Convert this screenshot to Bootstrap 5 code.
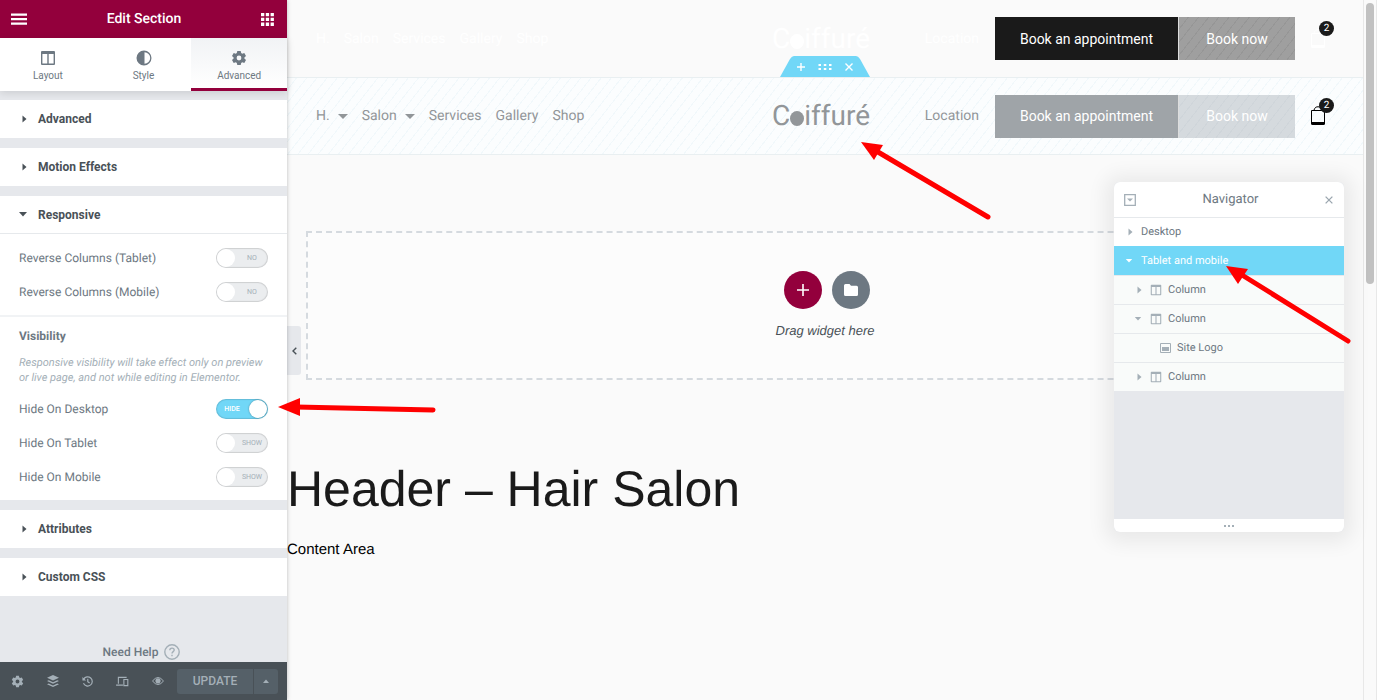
<!DOCTYPE html>
<html lang="en">
<head>
<meta charset="utf-8">
<meta name="viewport" content="width=device-width, initial-scale=1">
<title>Edit Section</title>
<link href="https://cdn.jsdelivr.net/npm/bootstrap@5.3.0/dist/css/bootstrap.min.css" rel="stylesheet">
<script src="https://cdn.jsdelivr.net/npm/bootstrap@5.3.0/dist/js/bootstrap.bundle.min.js" defer></script>
<style>
  :root { --brand:#93003c; --ink:#495157; --mid:#6d7882; --soft:#a4afb7; --line:#e6e9ec; --panel:#e6e8ec; --sky:#71d7f7; --black:#1a1a1a; }
  body { font-family:Roboto,"Liberation Sans",sans-serif; font-size:12px; line-height:20px; color:var(--mid); background:#fafafa; text-rendering:geometricPrecision; }
  button { font:inherit; color:inherit; background:none; border:0; padding:0; }
  svg { display:block; flex:none; fill:currentColor; }
  a { color:inherit; text-decoration:none; }

  /* Editor panel */
  .editor { width:287px; background:var(--panel); z-index:3; box-shadow:0 0 4px rgba(0,0,0,.25); }
  .editor-top { height:38px; background:var(--brand); color:#fff; padding:0 13px 0 11px; }
  .editor-top h1 { font-size:14px; line-height:20px; font-weight:500; }
  .tabs { box-shadow:0 2px 8px rgba(0,0,0,.12); background:#fff; height:53px; }
  .tabs button { font-size:10px; line-height:12px; border-bottom:3px solid transparent; padding-top:6px; }
  .tabs button.active { border-color:var(--brand); background:linear-gradient(#f1f3f5,#fff); }
  .sections { margin-top:9px; gap:10px; }
  .fold { height:38px; background:#fff; color:var(--ink); font-weight:700; padding:0 19px; gap:11px; text-align:left; width:100%; }
  .fold.open { border-bottom:1px solid var(--line); }
  .fold svg { width:8px; }
  .fold span { line-height:20px; }
  .controls { background:#fff; padding-bottom:13px; }
  .group { padding:14px 19px 0; gap:14px; }
  .group + .group { margin-top:13px; border-top:2px solid #f1f3f5; padding-top:9px; }
  .group h2 { font-size:12px; line-height:20px; font-weight:700; }
  .note { font-size:11px; line-height:15px; font-style:italic; color:var(--soft); margin:-5px 0 0; }
  .toggle-box { width:52px; height:20px; }
  .toggle-box input { appearance:none; width:52px; height:20px; border-radius:10px; background:#ebedef; box-shadow:inset 0 0 1px 1px rgba(0,0,0,.13); margin:0; display:block; }
  .toggle-box input::before { content:""; display:block; width:18px; height:18px; margin:1px; border-radius:50%; background:#fff; }
  .toggle-box input:checked { background:var(--sky); }
  .toggle-box input:checked::before { margin-left:33px; box-shadow:0 0 2px rgba(0,0,0,.4); }
  .toggle-box span { font-size:7px; line-height:20px; color:var(--soft); top:0; left:20px; right:0; text-align:center; pointer-events:none; }
  .toggle-box input:checked + span { left:0; right:20px; color:#fff; font-weight:500; }
  .help { font-weight:500; gap:6px; padding-right:4px; }
  .editor-foot { height:38px; background:var(--ink); color:var(--soft); padding-right:9px; }
  .tool { width:35px; height:38px; }
  .save-box { height:25px; background:#556068; border-radius:3px; font-weight:500; }
  .save-box .save { width:76px; }
  .save-box .more { border-left:1px solid var(--ink); width:25px; }

  /* Page preview */
  .preview { min-width:0; }
  .site-bar { display:grid; grid-template-columns:1fr auto 1fr; align-items:center; height:77px; padding:0 37px 0 29px; font-size:14px; color:#fff; }
  .site-bar.picked { height:78px; color:#929699; background:repeating-linear-gradient(128deg,#fbfdfe 0 7px,#f1f8fb 7px 8px); border:1px solid #e9eff1; border-left:0; border-right:0; }
  .menu { gap:14px; }
  .logo { font-size:28px; line-height:32px; }
  .logo i { width:14px; height:15px; border-radius:50%; background:currentColor; margin-top:5px; }
  .cta { height:43px; color:#fff; }
  .cta-a { width:184px; background:var(--black); border-right:1px solid #ddd; }
  .cta-b { width:116px; background:repeating-linear-gradient(128deg,#9f9f9f 0 7px,#969696 7px 8px); }
  .picked .cta-a { background:#9fa4a8; }
  .picked .cta-b { background:repeating-linear-gradient(128deg,#d5dade 0 7px,#cfd5da 7px 8px); }
  .bag { margin-left:15px; width:16px; height:20px; }
  .count { width:15px; height:15px; border-radius:50%; background:var(--black); color:#fff; font-size:10px; line-height:15px; text-align:center; top:-8px; right:-8px; }
  .handle { bottom:100%; left:50%; margin:0 0 1px -45px; width:90px; height:21px; color:#fff; }
  .handle > svg { color:var(--sky); }
  .handle > div { gap:13px; }
  .drop { margin:76px 19px 0; min-height:149px; border:2px dashed #d5dadf; background:#fcfcfc; color:var(--ink); font-family:"Liberation Sans",Arial,sans-serif; font-size:13px; font-style:italic; gap:12px; }
  .round-set { gap:10px; }
  .round-btn { width:38px; height:38px; border-radius:50%; color:#fff; background:var(--mid); }
  .round-btn.add { background:var(--brand); }
  .page-title { font-family:"Liberation Sans",Arial,sans-serif; font-size:50px; line-height:64px; font-weight:400; color:var(--black); margin:77px 0 0; white-space:nowrap; }
  .page-text { font-family:"Liberation Sans",Arial,sans-serif; font-size:15px; line-height:20px; color:#000; margin:19px 0 0; }
  .collapse-tab { left:0; top:326px; width:14px; height:49px; background:var(--panel); border-radius:0 3px 3px 0; }
  .scroller { width:14px; border:solid #e8e8e8; border-width:0 1px; padding:3px 2px; }
  .scroller div { height:281px; border-radius:4px; background:#c1c1c1; }

  /* Floating navigator window */
  .navigator { right:33px; top:182px; width:230px; height:350px; background:var(--panel); border-radius:5px; box-shadow:0 2px 20px 8px rgba(0,0,0,.07); font-size:11px; z-index:4; }
  .navigator header { height:35px; padding:0 11px 0 10px; background:#fff; font-size:13px; }
  .tree li { height:29px; border-top:1px solid var(--line); background:#f9fbfa; padding-left:20px; }
  .tree li.lvl-top { background:#fff; padding-left:11px; }
  .tree li.lvl-top.on { background:var(--sky); color:#fff; border-color:var(--sky); }
  .tree li.leaf { padding-left:46px; }
  .tree .caret { width:8px; margin-right:8px; }
  .tree .kind { margin-right:6px; }
  .tree svg { color:var(--soft); }
  .tree .on svg { color:#fff; }
  .navigator footer { height:13px; background:#fff; color:var(--soft); }
  .pointer { z-index:6; pointer-events:none; overflow:visible; }
  .pointer path { fill:#f00; }
  .pointer line { stroke:#f00; stroke-width:5; stroke-linecap:round; }
</style>
</head>
<body class="d-flex vh-100 overflow-hidden">
<svg class="d-none">
  <symbol id="right" viewBox="0 0 8 8"><path d="M3.500 .5l4 3.500-4 3.500z"/></symbol>
  <symbol id="down" viewBox="0 0 8 5"><path d="M0 0h8L4 4.500z"/></symbol>
  <symbol id="gear" viewBox="0 0 16 16"><path fill-rule="evenodd" d="M6.300 1h3.400l.5 2.100 1 .6 2.100-.7 1.700 3-1.600 1.400v1.200l1.600 1.400-1.700 3-2.100-.7-1 .6-.5 2.100H6.300l-.5-2.100-1-.6-2.100.7-1.700-3 1.600-1.400V7.400L1 6l1.700-3 2.100.7 1-.6zM8 5.600a2.400 2.400 0 1 0 0 4.800 2.400 2.400 0 0 0 0-4.800z"/></symbol>
  <symbol id="cols" viewBox="0 0 16 16"><path fill-rule="evenodd" d="M2 1h12a1 1 0 0 1 1 1v12a1 1 0 0 1-1 1H2a1 1 0 0 1-1-1V2a1 1 0 0 1 1-1zm.4 3v9.600h4.900V4zm6.300 0v9.600h4.900V4z"/></symbol>
  <symbol id="bag" viewBox="0 0 16 20"><path fill="none" stroke="currentColor" d="M1.500 4.500h13v12h-13zM4 4C5 1 6.500.8 8 .8S11 1 12 4"/><path d="M1 16h14v1.500q0 1.500-1.500 1.500h-11Q1 19 1 17.500z"/></symbol>
</svg>

<aside class="editor d-flex flex-column flex-shrink-0 position-relative">
  <header class="editor-top d-flex align-items-center justify-content-between">
    <button aria-label="Menu"><svg width="16" height="12" viewBox="0 0 16 12"><path d="M0 .5h16v2.200H0zM0 5h16v2.200H0zM0 9.500h16v2.200H0z"/></svg></button>
    <h1 class="m-0">Edit Section</h1>
    <button aria-label="Widgets"><svg width="13" height="13" viewBox="0 0 13 13"><path d="M0 0h3.300v3.300H0zM4.800 0h3.300v3.300H4.800zM9.600 0h3.300v3.300H9.600zM0 4.800h3.300v3.300H0zM4.800 4.800h3.300v3.300H4.800zM9.600 4.800h3.300v3.300H9.600zM0 9.600h3.300v3.300H0zM4.800 9.600h3.300v3.300H4.800zM9.600 9.600h3.300v3.300H9.600z"/></svg></button>
  </header>
  <nav class="tabs d-flex">
    <button class="flex-fill w-100 d-flex flex-column align-items-center justify-content-center gap-1"><svg width="16" height="16"><use href="#cols"/></svg>Layout</button>
    <button class="flex-fill w-100 d-flex flex-column align-items-center justify-content-center gap-1"><svg width="16" height="16" viewBox="0 0 16 16"><path fill-rule="evenodd" d="M8 .5a7.500 7.500 0 1 0 0 15 7.500 7.500 0 0 0 0-15zM8.500 2.300a5.700 5.700 0 0 1 0 11.400z"/></svg>Style</button>
    <button class="active flex-fill w-100 d-flex flex-column align-items-center justify-content-center gap-1"><svg width="16" height="16"><use href="#gear"/></svg>Advanced</button>
  </nav>
  <div class="sections d-flex flex-column">
    <button class="fold d-flex align-items-center"><svg height="8"><use href="#right"/></svg><span>Advanced</span></button>
    <button class="fold d-flex align-items-center"><svg height="8"><use href="#right"/></svg><span>Motion Effects</span></button>
    <section>
      <button class="fold open d-flex align-items-center" aria-expanded="true"><svg height="5"><use href="#down"/></svg><span>Responsive</span></button>
      <div class="controls">
        <div class="group d-flex flex-column">
          <div class="d-flex justify-content-between"><label for="rev-tablet">Reverse Columns (Tablet)</label><div class="toggle-box position-relative"><input type="checkbox" id="rev-tablet"><span class="position-absolute">NO</span></div></div>
          <div class="d-flex justify-content-between"><label for="rev-mobile">Reverse Columns (Mobile)</label><div class="toggle-box position-relative"><input type="checkbox" id="rev-mobile"><span class="position-absolute">NO</span></div></div>
        </div>
        <div class="group d-flex flex-column">
          <h2 class="m-0">Visibility</h2>
          <p class="note">Responsive visibility will take effect only on preview or live page, and not while editing in Elementor.</p>
          <div class="d-flex justify-content-between position-relative"><label for="hide-desktop">Hide On Desktop</label><div class="toggle-box position-relative"><input type="checkbox" id="hide-desktop" checked><span class="position-absolute">HIDE</span></div>
            <svg class="pointer position-absolute top-0 start-100" width="170" height="20" viewBox="0 0 170 20"><path d="M10 8L32-1v18z"/><line x1="28" y1="8" x2="165" y2="11"/></svg>
          </div>
          <div class="d-flex justify-content-between"><label for="hide-tablet">Hide On Tablet</label><div class="toggle-box position-relative"><input type="checkbox" id="hide-tablet"><span class="position-absolute">SHOW</span></div></div>
          <div class="d-flex justify-content-between"><label for="hide-mobile">Hide On Mobile</label><div class="toggle-box position-relative"><input type="checkbox" id="hide-mobile"><span class="position-absolute">SHOW</span></div></div>
        </div>
      </div>
    </section>
    <button class="fold d-flex align-items-center"><svg height="8"><use href="#right"/></svg><span>Attributes</span></button>
    <button class="fold d-flex align-items-center"><svg height="8"><use href="#right"/></svg><span>Custom CSS</span></button>
  </div>
  <a href="#" class="help mt-auto d-flex align-items-center justify-content-center">Need Help
    <svg width="16" height="16" viewBox="0 0 16 16" fill="none" stroke="#a4afb7" stroke-width="1.400"><circle cx="8" cy="8" r="7.200" fill="none"/><path fill="none" d="M5.800 6.300c0-3 4.400-2.700 4.400-.2 0 1.500-2.200 1.600-2.200 3.400M8 10.800v1.400"/></svg></a>
  <footer class="editor-foot d-flex align-items-center">
    <button class="tool d-flex align-items-center justify-content-center" aria-label="Settings"><svg width="13" height="13"><use href="#gear"/></svg></button>
    <button class="tool d-flex align-items-center justify-content-center" aria-label="Structure"><svg width="14" height="14" viewBox="0 0 14 14"><path d="M7 1l6 2.800-6 2.800-6-2.800zM1 7l1.700-.8L7 8.200l4.300-2L13 7 7 9.800zM1 10.200l1.700-.8L7 11.400l4.300-2 1.700.8L7 13z"/></svg></button>
    <button class="tool d-flex align-items-center justify-content-center" aria-label="History"><svg width="11" height="11" viewBox="0 0 12 12"><path fill="none" stroke="currentColor" stroke-width="1.300" d="M1.800 3.500a5 5 0 1 1-.2 4.500M6.300 3v3.300l2 1.200"/><path d="M.5 1v4h4z"/></svg></button>
    <button class="tool d-flex align-items-center justify-content-center" aria-label="Responsive mode"><svg width="13" height="11" viewBox="0 0 14 12"><path fill="none" stroke="currentColor" stroke-width="1.200" d="M2.500 8.500v-7h9M0 10h7.500M8.500 3.800h4.300v6.700H8.500z"/></svg></button>
    <button class="tool d-flex align-items-center justify-content-center" aria-label="Preview"><svg width="12" height="10" viewBox="0 0 12 10"><path fill="none" stroke="currentColor" d="M.5 5Q6-2 11.500 5 6 12 .5 5z"/><circle cx="6" cy="4.800" r="2.600"/></svg></button>
    <div class="save-box d-flex ms-auto"><button class="save">UPDATE</button><button class="more d-flex align-items-center justify-content-center" aria-label="Save options"><svg width="6" height="4" viewBox="0 0 6 4"><path d="M0 4l3-3.500L6 4z"/></svg></button></div>
  </footer>
</aside>

<main class="preview flex-grow-1 position-relative">
  <div class="site-bar">
    <nav class="menu d-flex"><a href="#">H.</a><a href="#">Salon</a><a href="#">Services</a><a href="#">Gallery</a><a href="#">Shop</a></nav>
    <a href="#" class="logo d-flex align-items-center">C<i></i>iffuré</a>
    <div class="d-flex align-items-center justify-content-end"><a href="#" class="me-3">Location</a><button class="cta cta-a">Book an appointment</button><button class="cta cta-b">Book now</button><a href="#" class="bag position-relative"><svg width="16" height="20"><use href="#bag"/></svg><span class="count position-absolute">2</span></a></div>
  </div>
  <div class="site-bar picked position-relative">
    <div class="handle position-absolute">
      <svg width="90" height="21" viewBox="0 0 90 21"><path d="M0 21L10 3q2-3 4-3h62q2 0 4 3l10 18z"/></svg>
      <div class="position-absolute top-0 start-0 w-100 h-100 d-flex align-items-center justify-content-center">
        <button aria-label="Add section"><svg width="8" height="8" viewBox="0 0 8 8"><path d="M3.300 0h1.400v3.300H8v1.400H4.700V8H3.300V4.700H0V3.300h3.300z"/></svg></button>
        <button aria-label="Edit section"><svg width="14" height="8" viewBox="0 0 14 8"><path d="M.5 1h2.500v2H.5zM5.800 1h2.500v2H5.800zM11 1h2.500v2H11zM.5 5h2.500v2H.5zM5.800 5h2.500v2H5.800zM11 5h2.500v2H11z"/></svg></button>
        <button aria-label="Delete section"><svg width="8" height="8" viewBox="0 0 8 8"><path stroke="currentColor" stroke-width="1.400" d="M.5.5l7 7M7.500.5l-7 7"/></svg></button>
      </div>
    </div>
    <nav class="menu d-flex"><a href="#" class="d-flex align-items-center gap-2">H. <svg width="10" height="5" viewBox="0 0 10 5"><path d="M0 0h10L5 5z"/></svg></a><a href="#" class="d-flex align-items-center gap-2">Salon <svg width="10" height="5" viewBox="0 0 10 5"><path d="M0 0h10L5 5z"/></svg></a><a href="#">Services</a><a href="#">Gallery</a><a href="#">Shop</a></nav>
    <a href="#" class="logo d-flex align-items-center position-relative">C<i></i>iffuré
      <svg class="pointer position-absolute top-100 start-100" width="130" height="90" viewBox="0 0 130 90"><path d="M-9 10l22 3-9 15z"/><line x1="8" y1="20" x2="118" y2="85"/></svg></a>
    <div class="d-flex align-items-center justify-content-end"><a href="#" class="me-3">Location</a><button class="cta cta-a">Book an appointment</button><button class="cta cta-b">Book now</button><a href="#" class="bag position-relative text-black"><svg width="16" height="20"><use href="#bag"/></svg><span class="count position-absolute">2</span></a></div>
  </div>
  <section class="drop d-flex flex-column align-items-center justify-content-center">
    <div class="round-set d-flex ps-1">
      <button class="round-btn add d-flex align-items-center justify-content-center" aria-label="Add widget"><svg width="12" height="12" viewBox="0 0 12 12"><path d="M5.200 0h1.600v5.200H12v1.600H6.800V12H5.200V6.800H0V5.200h5.200z"/></svg></button>
      <button class="round-btn d-flex align-items-center justify-content-center" aria-label="Add template"><svg width="14" height="12" viewBox="0 0 14 12"><path d="M1.500 0h4L7 1.700h5.500Q14 1.700 14 3.200v7.300q0 1.500-1.500 1.500h-11Q0 12 0 10.500v-9Q0 0 1.500 0z"/></svg></button>
    </div>
    <div>Drag widget here</div>
  </section>
  <h2 class="page-title">Header – Hair Salon</h2>
  <p class="page-text">Content Area</p>
  <button class="collapse-tab position-absolute d-flex align-items-center justify-content-center" aria-label="Collapse panel"><svg width="5" height="8" viewBox="0 0 5 8"><path fill="none" stroke="#495157" stroke-width="1.400" d="M4.300.8L1 4l3.300 3.200"/></svg></button>
</main>
<div class="scroller flex-shrink-0"><div></div></div>

<section class="navigator position-absolute d-flex flex-column">
  <header class="d-flex align-items-center justify-content-between rounded-top">
    <button aria-label="Expand all"><svg width="12" height="12" viewBox="0 0 12 12" color="#a4afb7"><path fill="none" stroke="currentColor" stroke-width="1.300" d="M.7.7h10.600v10.600H.7z"/><path d="M3 4.500h6l-3 3z"/></svg></button>
    Navigator
    <button aria-label="Close"><svg width="8" height="8" viewBox="0 0 9 9"><path stroke="#9ba6af" stroke-width="1.500" d="M.7.7l7.600 7.600M8.300.7L.7 8.300"/></svg></button>
  </header>
  <ul class="tree list-unstyled m-0">
    <li class="lvl-top d-flex align-items-center"><svg class="caret" height="8"><use href="#right"/></svg>Desktop</li>
    <li class="lvl-top on d-flex align-items-center position-relative"><svg class="caret" height="4"><use href="#down"/></svg>Tablet and mobile
      <svg class="pointer position-absolute top-0 start-50" width="125" height="100" viewBox="0 0 125 100"><path d="M-3 19l22 3-10 15z"/><line x1="13" y1="28" x2="119" y2="94"/></svg></li>
    <li class="d-flex align-items-center"><svg class="caret" height="8"><use href="#right"/></svg><svg class="kind" width="12" height="12"><use href="#cols"/></svg>Column</li>
    <li class="d-flex align-items-center"><svg class="caret" height="4"><use href="#down"/></svg><svg class="kind" width="12" height="12"><use href="#cols"/></svg>Column</li>
    <li class="leaf d-flex align-items-center"><svg class="kind" width="11" height="10" viewBox="0 0 11 10"><path fill="none" stroke="currentColor" d="M.5.5h10v9H.5z"/><path d="M2 4h7v4H2z"/></svg>Site Logo</li>
    <li class="d-flex align-items-center"><svg class="caret" height="8"><use href="#right"/></svg><svg class="kind" width="12" height="12"><use href="#cols"/></svg>Column</li>
  </ul>
  <footer class="mt-auto rounded-bottom d-flex align-items-center justify-content-center"><svg width="10" height="2" viewBox="0 0 10 2"><path d="M0 0h2v2H0zM4 0h2v2H4zM8 0h2v2H8z"/></svg></footer>
</section>
</body>
</html>
